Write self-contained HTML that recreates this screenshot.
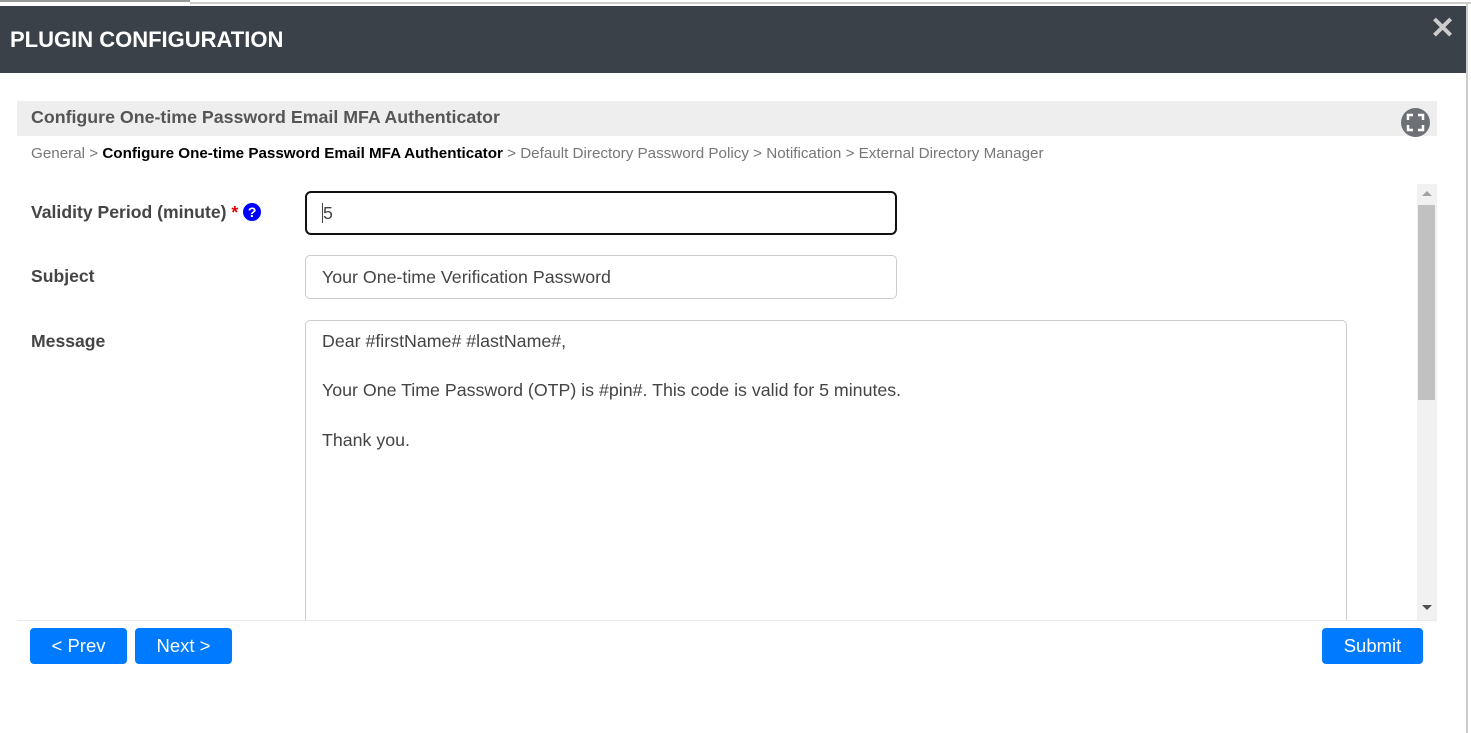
<!DOCTYPE html>
<html><head><meta charset="utf-8"><style>
*{box-sizing:border-box;margin:0;padding:0}
body{width:1471px;height:733px;background:#fff;font-family:"Liberation Sans",Arial,sans-serif;position:relative;overflow:hidden}
.a{position:absolute}
.hdr{left:0;top:6px;width:1466px;height:67px;background:#3b4148}
.hdr h1{position:absolute;left:10px;top:21px;color:#fff;font-size:22px;font-weight:bold}
.lbl{font-size:17.6px;font-weight:bold;color:#444}
.inp{border:1px solid #ccc;border-radius:5px;font-size:17.8px;color:#444;padding-left:16px}
.btn{background:#007bff;color:#fff;font-size:18.5px;border-radius:4px;text-align:center;line-height:36px}
</style></head><body>
<div class="a" style="left:0;top:0;width:190px;height:2px;background:#999"></div>
<div class="a" style="left:190px;top:2px;width:1281px;height:2px;background:#ccc"></div>
<div class="a" style="left:1466px;top:4px;width:2px;height:729px;background:#ccc"></div>
<div class="a hdr"><h1>PLUGIN CONFIGURATION</h1>
<div class="a" style="left:1430px;top:5px;color:#ccc;font-size:30px;font-weight:bold">✕</div></div>
<div class="a" style="left:17px;top:101px;width:1420px;height:35px;background:#eee"></div>
<div class="a" style="left:31px;top:107px;font-size:17.8px;font-weight:bold;color:#555">Configure One-time Password Email MFA Authenticator</div>
<svg class="a" style="left:1401px;top:108px" width="29" height="29" viewBox="0 0 29 29"><circle cx="14.5" cy="14.5" r="14.5" fill="#6d7175"/><path d="M7 12V7h5M17 7h5v5M22 17v5h-5M12 22H7v-5" stroke="#fff" stroke-width="2.5" fill="none"/></svg>
<div class="a" style="left:31px;top:145px;font-size:15.2px;color:#777;white-space:nowrap">General &gt; <b style="color:#000">Configure One-time Password Email MFA Authenticator</b> &gt; Default Directory Password Policy &gt; Notification &gt; External Directory Manager</div>
<div class="a lbl" style="left:31px;top:202px">Validity Period (minute) <span style="color:#d00">*</span> <span style="display:inline-block;width:18px;height:18px;border-radius:50%;background:#00f;color:#fff;font-size:14px;text-align:center;line-height:18px;vertical-align:1px">?</span></div>
<div class="a inp" style="left:305px;top:191px;width:592px;height:44px;border:2px solid #111;border-radius:6px;line-height:40px;padding-left:15px"><span style="border-left:1px solid #444">5</span></div>
<div class="a lbl" style="left:31px;top:266px">Subject</div>
<div class="a inp" style="left:305px;top:255px;width:592px;height:44px;line-height:42px">Your One-time Verification Password</div>
<div class="a lbl" style="left:31px;top:331px">Message</div>
<div class="a inp" style="left:305px;top:320px;width:1042px;height:310px;padding-top:8px;line-height:24.7px;border-bottom:none;border-radius:5px 5px 0 0">Dear #firstName# #lastName#,<br><br>Your One Time Password (OTP) is #pin#. This code is valid for 5 minutes.<br><br>Thank you.</div>
<div class="a" style="left:1417px;top:184px;width:20px;height:436px;background:#f1f1f1"></div>
<div class="a" style="left:1418px;top:205px;width:17px;height:195px;background:#c1c1c1"></div>
<div class="a" style="left:1422px;top:191px;width:0;height:0;border-left:5px solid transparent;border-right:5px solid transparent;border-bottom:5px solid #a3a3a3"></div>
<div class="a" style="left:1422px;top:605px;width:0;height:0;border-left:5px solid transparent;border-right:5px solid transparent;border-top:5px solid #505050"></div>
<div class="a" style="left:17px;top:620px;width:1420px;height:113px;background:#fff;border-top:1px solid #e9e9e9"></div>
<div class="a btn" style="left:30px;top:628px;width:97px;height:36px">&lt; Prev</div>
<div class="a btn" style="left:135px;top:628px;width:97px;height:36px">Next &gt;</div>
<div class="a btn" style="left:1322px;top:628px;width:101px;height:36px">Submit</div>
</body></html>
